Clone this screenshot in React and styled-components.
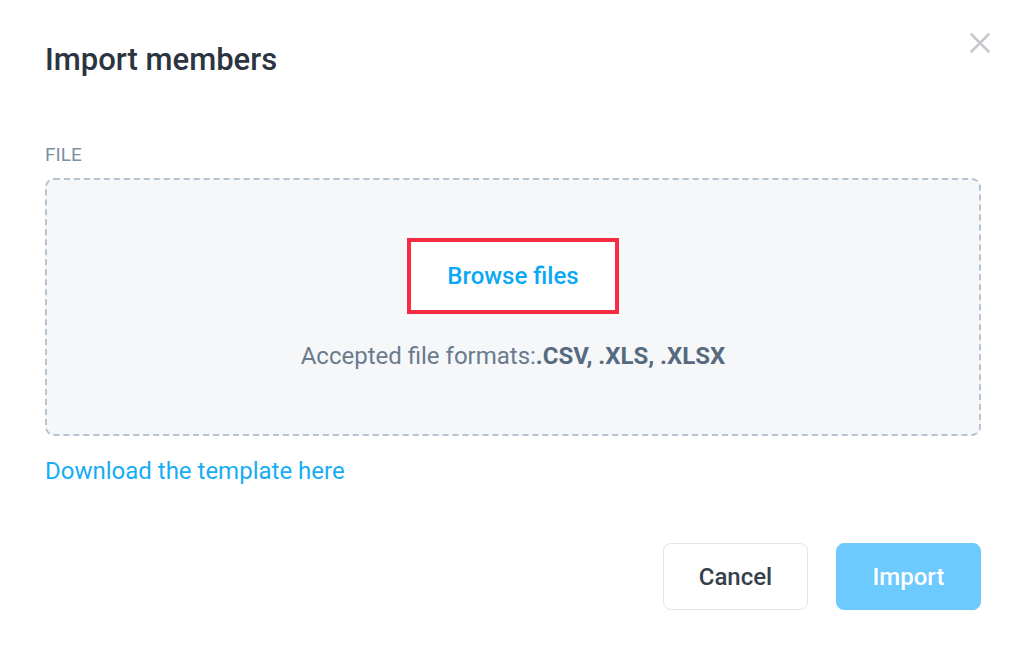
import React from 'react';
import styled, { createGlobalStyle } from 'styled-components';

const GlobalStyle = createGlobalStyle`
  body {
    margin: 0;
    padding: 0;
    background-color: #ffffff;
    font-family: Roboto, "Liberation Sans", sans-serif;
  }
`;

function App() {
  return (
    <>
      <GlobalStyle />
      <Modal>
        <Header>
          <Title>Import members</Title>
          <CloseButton aria-label="Close">
            <svg width="20" height="20" viewBox="0 0 20 20">
              <path
                d="M1.5 1.5 L18.5 18.5 M18.5 1.5 L1.5 18.5"
                stroke="#c6c9cd"
                strokeWidth="2.6"
                strokeLinecap="round"
              />
            </svg>
          </CloseButton>
        </Header>

        <Label>FILE</Label>
        <DropZone>
          <BrowseButton>Browse files</BrowseButton>
          <Formats>
            Accepted file formats:<strong>.CSV, .XLS, .XLSX</strong>
          </Formats>
        </DropZone>
        <TemplateLink href="#">Download the template here</TemplateLink>

        <Footer>
          <Button>Cancel</Button>
          <Button primary>Import</Button>
        </Footer>
      </Modal>
    </>
  );
}
export default App;

const Modal = styled.div`
  display: flex;
  flex-direction: column;
  align-items: flex-start;
  padding: 33px 43px 0 45px;
  width: 1024px;
  height: 656px;
  box-sizing: border-box;
`;

const Header = styled.div`
  display: flex;
  justify-content: space-between;
  align-items: flex-start;
  width: 100%;
  margin-bottom: 66px;
`;

const Title = styled.h2`
  margin: 9px 0 0;
  font-size: 31px;
  line-height: 36px;
  font-weight: 500;
  color: #2b3440;
`;

const CloseButton = styled.button`
  background: transparent;
  border: none;
  padding: 0;
  margin-right: -9px;
  width: 20px;
  height: 20px;
  cursor: pointer;
  display: flex;
`;

const Label = styled.div`
  font-size: 19px;
  line-height: 22px;
  color: #7d8ea5;
  margin-bottom: 12px;
`;

const DropZone = styled.div`
  width: 100%;
  height: 258px;
  box-sizing: border-box;
  border: 2px dashed #b6c3d1;
  border-radius: 9px;
  background-color: #f5f7f9;
  display: flex;
  flex-direction: column;
  align-items: center;
  padding-top: 58px;
  gap: 28px;
`;

const BrowseButton = styled.button`
  width: 212px;
  height: 76px;
  box-sizing: border-box;
  border: 4px solid #f72b41;
  background-color: #ffffff;
  color: #0aa8f5;
  font-family: Roboto, "Liberation Sans", sans-serif;
  font-size: 24px;
  font-weight: 500;
  cursor: pointer;
  padding: 0;
`;

const Formats = styled.p`
  margin: 0;
  font-size: 24px;
  line-height: 28px;
  color: #6b7b8e;

  strong {
    font-weight: 700;
    color: #566a80;
  }
`;

const TemplateLink = styled.a`
  margin-top: 21px;
  font-size: 24px;
  line-height: 28px;
  color: #16adf5;
  text-decoration: none;
`;

const Footer = styled.div`
  display: flex;
  justify-content: flex-end;
  gap: 28px;
  width: 100%;
  margin-top: 58px;
`;

const Button = styled.button`
  width: 145px;
  height: 67px;
  box-sizing: border-box;
  border-radius: 8px;
  border: 1.5px solid ${(p) => (p.primary ? '#6ccaff' : '#dfe5ec')};
  background-color: ${(p) => (p.primary ? '#6ccaff' : '#ffffff')};
  color: ${(p) => (p.primary ? '#ffffff' : '#36404c')};
  font-family: Roboto, "Liberation Sans", sans-serif;
  font-size: 24px;
  font-weight: 500;
  cursor: pointer;
`;
